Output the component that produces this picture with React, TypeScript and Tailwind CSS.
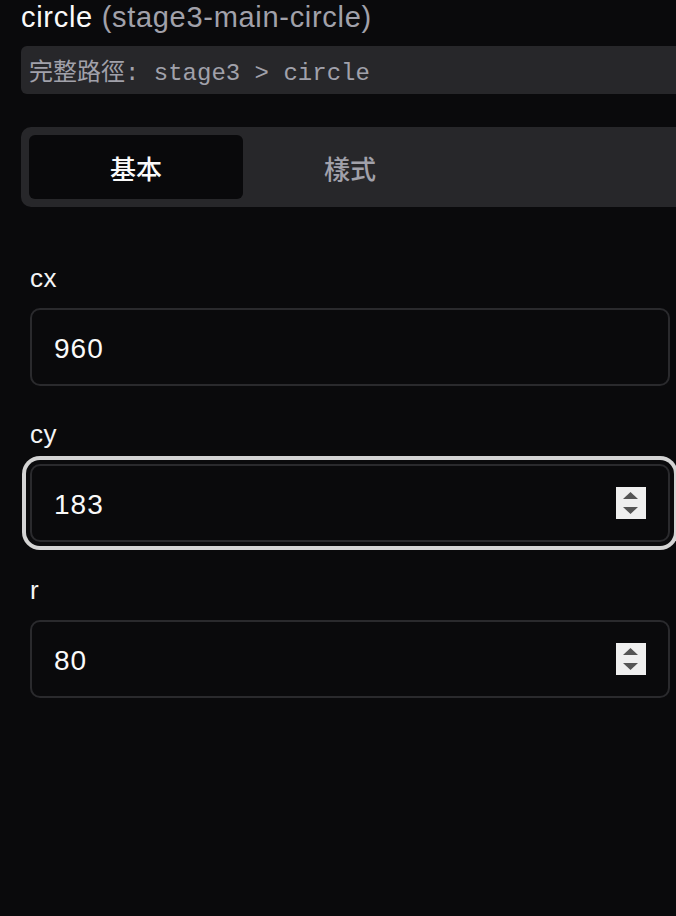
import React from 'react';

const sans = { fontFamily: '"Liberation Sans", "Noto Sans CJK TC", sans-serif' };

const Spinner: React.FC = () => (
  <div className="h-[32px] w-[30px] shrink-0 bg-[#efefef]">
    <svg width="30" height="32" viewBox="0 0 30 32">
      <polygon points="7,12 22,12 14.5,5" fill="#555" />
      <polygon points="7,20 22,20 14.5,27" fill="#555" />
    </svg>
  </div>
);

interface FieldProps {
  label: string;
  value: string;
  focused?: boolean;
  spinner?: boolean;
}

const Field: React.FC<FieldProps> = ({ label, value, focused, spinner }) => (
  <div className="flex flex-col">
    <label className="text-[26px] leading-[32px] tracking-[0.5px] text-[#f4f4f5]" style={sans}>
      {label}
    </label>
    <div
      className={`mt-[14px] flex h-[78px] w-[640px] items-center justify-between rounded-[10px] border-2 border-[#2a2a2d] bg-[#0a0a0c] pl-[22px] pr-[22px] ${
        focused ? 'ring-4 ring-[#d4d4d4] ring-offset-4 ring-offset-[#0a0a0c]' : ''
      }`}
    >
      <span className="pt-[3px] text-[28px] leading-none tracking-[1px] text-[#fafafa]" style={sans}>
        {value}
      </span>
      {spinner && <Spinner />}
    </div>
  </div>
);

export default function App() {
  return (
    <div className="h-[916px] w-[676px] overflow-hidden bg-[#0a0a0c]">
      <div className="ml-[21px] w-[720px]">
        <div className="text-[29px] leading-[35px] tracking-[0.7px]" style={sans}>
          <span className="text-[#fafafa]">circle</span>{' '}
          <span className="text-[#a1a1aa]">(stage3-main-circle)</span>
        </div>

        <div
          className="mt-[11px] flex h-[48px] items-center rounded-md bg-[#27272a] pl-2 pt-[7px] text-[24px] text-[#a1a1aa]"
          style={{ fontFamily: '"Liberation Mono", "Noto Sans CJK TC", monospace' }}
        >
          完整路徑: stage3 &gt; circle
        </div>

        <div className="mt-[33px] flex h-[80px] rounded-[10px] bg-[#27272a] p-2">
          <button
            className="flex w-[214px] items-center justify-center rounded-md bg-[#09090b] text-[26px] font-medium text-[#fafafa]"
            style={{ fontFamily: '"Noto Sans CJK TC", sans-serif' }}
          >
            基本
          </button>
          <button
            className="flex w-[214px] items-center justify-center rounded-md text-[26px] font-medium text-[#a1a1aa]"
            style={{ fontFamily: '"Noto Sans CJK TC", sans-serif' }}
          >
            樣式
          </button>
        </div>

        <div className="mt-[55px] flex flex-col gap-[32px] px-[9px]">
          <Field label="cx" value="960" />
          <Field label="cy" value="183" focused spinner />
          <Field label="r" value="80" spinner />
        </div>
      </div>
    </div>
  );
}
